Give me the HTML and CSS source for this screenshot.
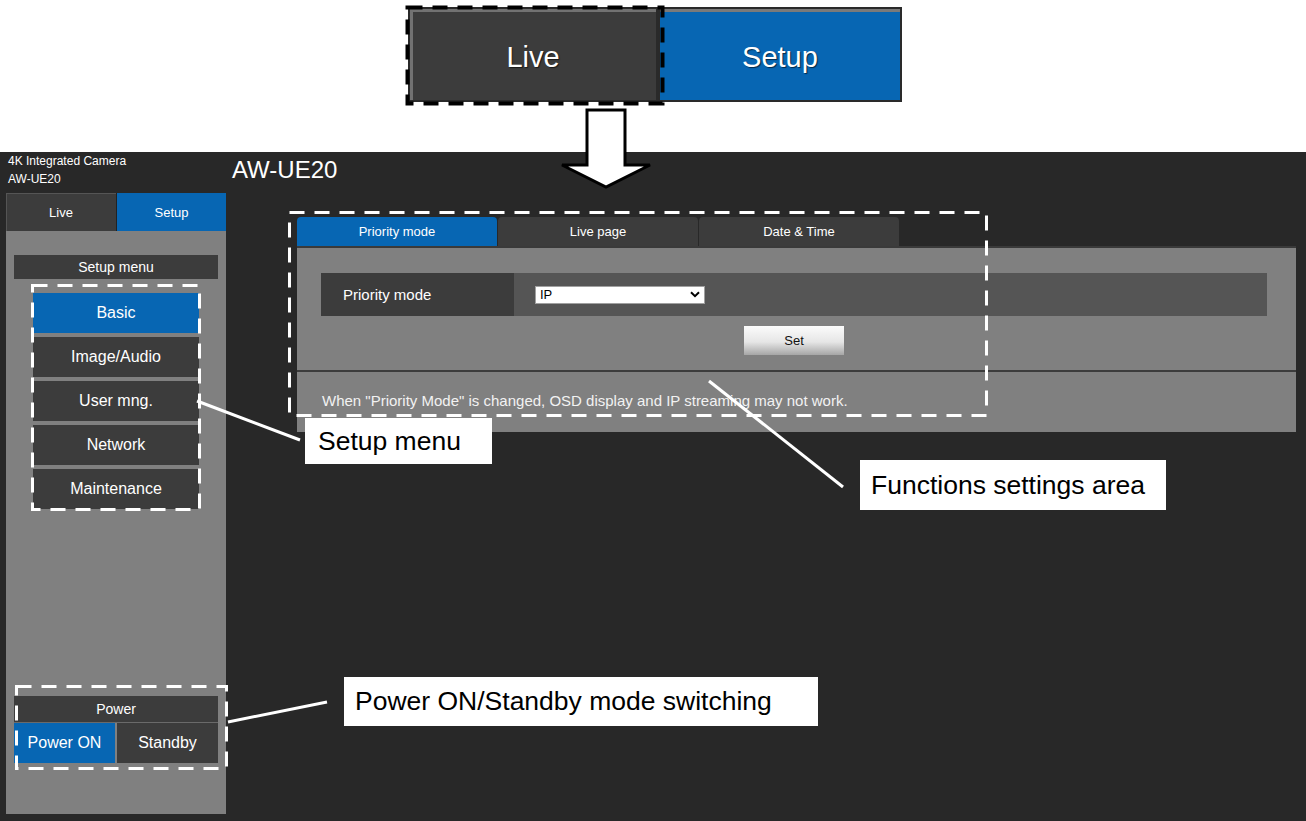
FILE: index.html
```html
<!DOCTYPE html>
<html lang="en">
  <head>
    <meta charset="UTF-8" />
    <meta name="viewport" content="width=device-width, initial-scale=1.0" />
    <title>AW-UE20 Setup</title>
    <link rel="stylesheet" href="styles.css">
  </head>
  <body>
    <div class="page">
      <!-- Live / Setup switch shown enlarged -->
      <div class="hero">
        <div class="big-tabs">
          <div class="big-tab live">Live</div>
          <div class="big-tab setup">Setup</div>
        </div>
      </div>

      <!-- Camera web screen -->
      <div class="app">
        <aside class="side">
          <div class="brand">4K Integrated Camera<br />AW-UE20</div>
          <div class="mode-tabs">
            <div class="mode-tab">Live</div>
            <div class="mode-tab on">Setup</div>
          </div>
          <div class="side-body">
            <div class="side-head">Setup menu</div>
            <ul class="menu">
              <li class="on">Basic</li>
              <li>Image/Audio</li>
              <li>User mng.</li>
              <li>Network</li>
              <li>Maintenance</li>
            </ul>
            <div class="power">
              <div class="side-head power-head">Power</div>
              <div class="power-btns">
                <div class="power-btn on">Power ON</div>
                <div class="power-btn">Standby</div>
              </div>
            </div>
          </div>
        </aside>

        <main class="main">
          <h1 class="title">AW-UE20</h1>
          <div class="tabs">
            <div class="tab on">Priority mode</div>
            <div class="tab">Live page</div>
            <div class="tab">Date &amp; Time</div>
          </div>
          <div class="panel">
            <div class="panel-top">
              <div class="row">
                <div class="row-label">Priority mode</div>
                <div class="row-value">
                  <div class="select">
                    <span>IP</span>
                    <svg width="10" height="7" viewBox="0 0 10 7"><path d="M1 1.2 L5 5.2 L9 1.2" fill="none" stroke="#000" stroke-width="2"/></svg>
                  </div>
                </div>
              </div>
              <div class="set-wrap"><div class="set-btn">Set</div></div>
            </div>
            <div class="panel-note">When "Priority Mode" is changed, OSD display and IP streaming may not work.</div>
          </div>
        </main>
      </div>

      <!-- annotations -->
      <svg class="marks" width="1306" height="821" viewBox="0 0 1306 821">
        <rect x="407.5" y="7.5" width="255" height="96" fill="none" stroke="#000" stroke-width="4" stroke-dasharray="15 10"/>
        <path d="M587 110 H625 V165 H650 L606 187 L562 165 H587 Z" fill="#fff" stroke="#000" stroke-width="3"/>
        <g fill="none" stroke="#fff" stroke-width="3" stroke-dasharray="15 10">
          <rect x="32.5" y="285.5" width="167" height="224"/>
          <rect x="289.5" y="212.5" width="697" height="203"/>
          <rect x="16.5" y="686.5" width="210" height="82"/>
        </g>
        <g stroke="#fff" stroke-width="3">
          <line x1="197" y1="401" x2="300" y2="440"/>
          <line x1="228" y1="722" x2="327" y2="702"/>
          <line x1="709" y1="381" x2="843" y2="487"/>
        </g>
      </svg>
      <div class="note note-menu">Setup menu</div>
      <div class="note note-func">Functions settings area</div>
      <div class="note note-power">Power ON/Standby mode switching</div>
    </div>
  </body>
</html>
```

FILE: styles.css
```css
body {
  margin: 0;
  font-family: "Liberation Sans", Arial, sans-serif;
  background: #fff;
  color: #fff;
}
.page {
  position: relative;
  width: 1306px;
  height: 821px;
  overflow: hidden;
}
.hero {
  height: 152px;
  background: #fff;
}
.big-tabs {
  display: flex;
  padding: 7px 0 0 408px;
}
.big-tab {
  height: 95px;
  box-sizing: border-box;
  display: flex;
  align-items: center;
  justify-content: center;
  padding-top: 5px;
  font-size: 29px;
  text-shadow: 1px 1px 1px rgba(0, 0, 0, 0.6);
  border: 2px solid #2a2a2a;
}
.big-tab.live {
  width: 250px;
  background: #3c3c3c;
  box-shadow: inset 3px 3px 0 #727272;
}
.big-tab.setup {
  width: 244px;
  background: #0766b3;
  box-shadow: inset 0 3px 0 #7a7a7a;
}
.app {
  display: flex;
  height: 669px;
  background: #282828;
}
.side {
  width: 220px;
  margin: 0 0 7px 6px;
  display: flex;
  flex-direction: column;
}
.brand {
  height: 41px;
  padding-left: 2px;
  font-size: 12px;
  line-height: 18px;
}
.mode-tabs {
  display: flex;
  height: 38px;
}
.mode-tab {
  width: 109px;
  display: flex;
  align-items: center;
  justify-content: center;
  font-size: 13px;
  background: #3c3c3c;
  box-shadow: inset 0 1px 0 #555, inset 1px 0 0 #555;
}
.mode-tab:first-child {
  width: 110px;
  border-right: 1px solid #222;
}
.mode-tab.on {
  background: #0766b3;
  box-shadow: none;
}
.side-body {
  flex: 1;
  background: #808080;
  padding: 24px 8px 51px;
  display: flex;
  flex-direction: column;
}
.side-head {
  height: 24px;
  line-height: 24px;
  text-align: center;
  font-size: 14px;
  background: #3c3c3c;
}
.menu {
  list-style: none;
  margin: 14px 19px 0;
  padding: 0;
  display: flex;
  flex-direction: column;
  gap: 4px;
}
.menu li {
  height: 40px;
  line-height: 40px;
  text-align: center;
  font-size: 16px;
  background: #3c3c3c;
}
.menu li.on {
  background: #0766b3;
}
.power {
  margin-top: auto;
}
.power-head {
  height: 26px;
  line-height: 26px;
  border-bottom: 1px solid #6a6a6a;
}
.power-btns {
  display: flex;
  gap: 2px;
}
.power-btn {
  flex: 1;
  height: 40px;
  line-height: 40px;
  text-align: center;
  font-size: 16px;
  background: #3c3c3c;
}
.power-btn.on {
  background: #0766b3;
}
.main {
  flex: 1;
  padding-left: 6px;
}
.title {
  margin: 4px 0 0;
  font-size: 24px;
  line-height: 28px;
  font-weight: normal;
}
.tabs {
  display: flex;
  gap: 1px;
  margin: 33px 0 0 65px;
}
.tab {
  width: 200px;
  height: 29px;
  line-height: 29px;
  text-align: center;
  font-size: 13px;
  background: #3c3c3c;
  border-radius: 4px 4px 0 0;
}
.tab.on {
  background: #0766b3;
}
.panel {
  margin: 0 10px 0 65px;
  background: #808080;
  border-top: 2px solid #3a3a3a;
}
.panel-top {
  padding: 25px 29px 15px 24px;
  border-bottom: 2px solid #3c3c3c;
}
.row {
  display: grid;
  grid-template-columns: 193px 1fr;
  height: 43px;
}
.row-label {
  display: flex;
  align-items: center;
  padding-left: 22px;
  font-size: 15px;
  background: #3c3c3c;
}
.row-value {
  display: flex;
  align-items: center;
  padding-left: 21px;
  background: #555;
}
.select {
  width: 170px;
  height: 18px;
  box-sizing: border-box;
  display: flex;
  align-items: center;
  justify-content: space-between;
  padding: 0 4px 0 4px;
  background: #fff;
  border: 1px solid #a0a0a0;
  color: #000;
  font-size: 13px;
}
.set-wrap {
  display: flex;
  justify-content: center;
  margin-top: 10px;
}
.set-btn {
  width: 100px;
  height: 29px;
  line-height: 29px;
  text-align: center;
  font-size: 13px;
  color: #111;
  background: linear-gradient(#fbfbfb 0%, #e6e6e6 55%, #a6a6a6 100%);
}
.panel-note {
  height: 60px;
  line-height: 58px;
  padding-left: 25px;
  font-size: 15px;
  color: #f2f2f2;
}
.marks {
  position: absolute;
  top: 0;
  left: 0;
  pointer-events: none;
}
.note {
  position: absolute;
  box-sizing: border-box;
  background: #fff;
  color: #000;
  font-size: 26.5px;
  display: flex;
  align-items: center;
}
.note-menu {
  left: 305px;
  top: 418px;
  width: 187px;
  height: 46px;
  padding-left: 13px;
}
.note-func {
  left: 860px;
  top: 460px;
  width: 306px;
  height: 50px;
  padding-left: 11px;
}
.note-power {
  left: 344px;
  top: 677px;
  width: 474px;
  height: 49px;
  padding-left: 11px;
}
```
